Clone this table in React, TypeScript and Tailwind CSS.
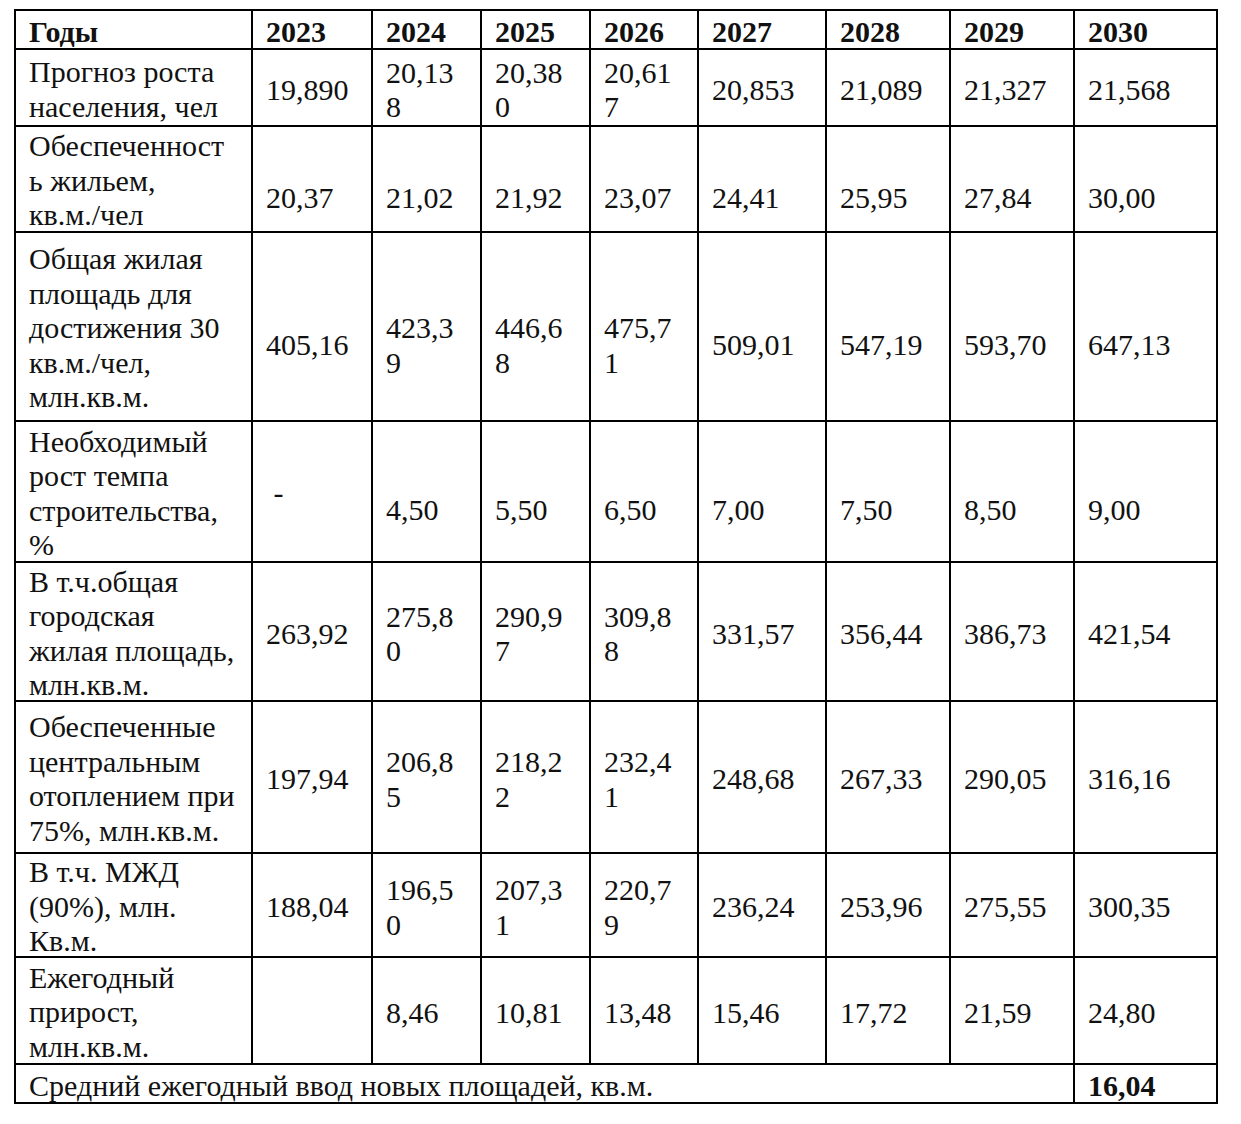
import React from "react";

type Row = {
  label: string[];
  values: (string[] | null)[];
  shifted: boolean;
};

const years = ["2023", "2024", "2025", "2026", "2027", "2028", "2029", "2030"];

const rows: Row[] = [
  {
    label: ["Прогноз роста", "населения, чел"],
    values: [["19,890"], ["20,13", "8"], ["20,38", "0"], ["20,61", "7"], ["20,853"], ["21,089"], ["21,327"], ["21,568"]],
    shifted: false,
  },
  {
    label: ["Обеспеченност", "ь жильем,", "кв.м./чел"],
    values: [["20,37"], ["21,02"], ["21,92"], ["23,07"], ["24,41"], ["25,95"], ["27,84"], ["30,00"]],
    shifted: true,
  },
  {
    label: ["Общая жилая", "площадь для", "достижения 30", "кв.м./чел,", "млн.кв.м."],
    values: [["405,16"], ["423,3", "9"], ["446,6", "8"], ["475,7", "1"], ["509,01"], ["547,19"], ["593,70"], ["647,13"]],
    shifted: true,
  },
  {
    label: ["Необходимый", "рост темпа", "строительства,", "%"],
    values: [null, ["4,50"], ["5,50"], ["6,50"], ["7,00"], ["7,50"], ["8,50"], ["9,00"]],
    shifted: true,
  },
  {
    label: ["В т.ч.общая", "городская", "жилая площадь,", "млн.кв.м."],
    values: [["263,92"], ["275,8", "0"], ["290,9", "7"], ["309,8", "8"], ["331,57"], ["356,44"], ["386,73"], ["421,54"]],
    shifted: false,
  },
  {
    label: ["Обеспеченные", "центральным", "отоплением при", "75%, млн.кв.м."],
    values: [["197,94"], ["206,8", "5"], ["218,2", "2"], ["232,4", "1"], ["248,68"], ["267,33"], ["290,05"], ["316,16"]],
    shifted: false,
  },
  {
    label: ["В т.ч. МЖД", "(90%), млн.", "Кв.м."],
    values: [["188,04"], ["196,5", "0"], ["207,3", "1"], ["220,7", "9"], ["236,24"], ["253,96"], ["275,55"], ["300,35"]],
    shifted: false,
  },
  {
    label: ["Ежегодный", "прирост,", "млн.кв.м."],
    values: [[], ["8,46"], ["10,81"], ["13,48"], ["15,46"], ["17,72"], ["21,59"], ["24,80"]],
    shifted: false,
  },
];

function Lines({ lines }: { lines: string[] }) {
  return (
    <>
      {lines.map((l, i) => (
        <span key={i} className="block whitespace-pre">
          {l}
        </span>
      ))}
    </>
  );
}

export default function App() {
  return (
    <div className="min-h-screen bg-white pt-[9px] pl-[14px] font-['Liberation_Serif','Times_New_Roman',serif] text-[30px] leading-[34.5px] text-[#111]">
      <div className="grid w-[1204px] grid-cols-[237px_120px_109px_109px_108px_128px_124px_124px_143px] grid-rows-[39px_77px_106px_189px_141px_139px_152px_104px_107px_39px] border-l-2 border-t-2 border-black">
        {/* header */}
        <div className="flex flex-col justify-center border-r-2 border-b-2 border-black pl-[13px] pt-[5px] font-bold whitespace-nowrap">
          Годы
        </div>
        {years.map((y) => (
          <div
            key={y}
            className="flex flex-col justify-center border-r-2 border-b-2 border-black pl-[13px] pt-[5px] font-bold whitespace-nowrap"
          >
            {y}
          </div>
        ))}

        {rows.map((r, ri) => (
          <React.Fragment key={ri}>
            <div className="flex flex-col justify-center border-r-2 border-b-2 border-black pl-[13px] pt-[4px]">
              <Lines lines={r.label} />
            </div>
            {r.values.map((v, vi) =>
              v === null ? (
                <div
                  key={vi}
                  className="flex flex-col justify-center border-r-2 border-b-2 border-black pl-[13px] pt-[4px] whitespace-pre"
                >
                  {" -"}
                </div>
              ) : (
                <div
                  key={vi}
                  className={
                    r.shifted
                      ? "flex flex-col justify-center border-r-2 border-b-2 border-black pl-[13px] pt-[38px]"
                      : "flex flex-col justify-center border-r-2 border-b-2 border-black pl-[13px] pt-[5px]"
                  }
                >
                  <Lines lines={v} />
                </div>
              )
            )}
          </React.Fragment>
        ))}

        {/* footer */}
        <div className="col-span-8 flex flex-col justify-center border-r-2 border-b-2 border-black pl-[13px] pt-[5px] whitespace-nowrap">
          Средний ежегодный ввод новых площадей, кв.м.
        </div>
        <div className="flex flex-col justify-center border-r-2 border-b-2 border-black pl-[13px] pt-[5px] font-bold whitespace-nowrap">
          16,04
        </div>
      </div>
    </div>
  );
}
